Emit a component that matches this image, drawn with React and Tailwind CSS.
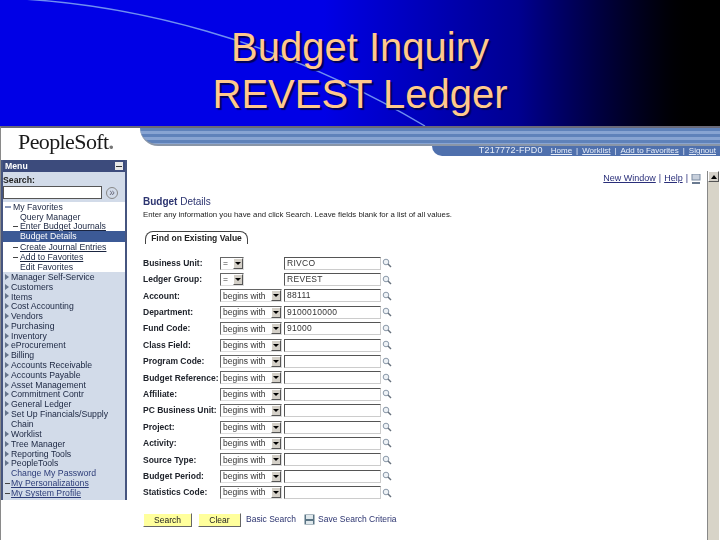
const menuTop = ['Manager Self-Service', 'Customers', 'Items', 'Cost Accounting', 'Vendors', 'Purchasing', 'Inventory', 'eProcurement', 'Billing', 'Accounts Receivable', 'Accounts Payable', 'Asset Management', 'Commitment Contr', 'General Ledger'];

const fields = [
    { label: 'Business Unit:', op: '=', value: 'RIVCO' },
    { label: 'Ledger Group:', op: '=', value: 'REVEST' },
    { label: 'Account:', op: 'begins with', value: '88111' },
    { label: 'Department:', op: 'begins with', value: '9100010000' },
    { label: 'Fund Code:', op: 'begins with', value: '91000' },
    { label: 'Class Field:', op: 'begins with', value: '' },
    { label: 'Program Code:', op: 'begins with', value: '' },
    { label: 'Budget Reference:', op: 'begins with', value: '' },
    { label: 'Affiliate:', op: 'begins with', value: '' },
    { label: 'PC Business Unit:', op: 'begins with', value: '' },
    { label: 'Project:', op: 'begins with', value: '' },
    { label: 'Activity:', op: 'begins with', value: '' },
    { label: 'Source Type:', op: 'begins with', value: '' },
    { label: 'Budget Period:', op: 'begins with', value: '' },
    { label: 'Statistics Code:', op: 'begins with', value: '' },
];

function Lens() {
    return (
        <svg width="10" height="10" viewBox="0 0 10 10" className="shrink-0">
            <circle cx="4" cy="4" r="2.8" fill="#eef2f6" stroke="#8a98a8" strokeWidth="1" />
            <path d="M6 6l3 3" stroke="#66707c" strokeWidth="1.4" />
        </svg>
    );
}

function Arrow() {
    return <span className="w-0 h-0 border-y-[3.5px] border-y-transparent border-l-[4px] border-l-[#66758c] shrink-0" />;
}

function Dash() {
    return <span className="w-[5px] h-[1px] bg-[#444] shrink-0" />;
}

function FieldRow({ field }) {
    const short = field.op === '=';
    return (
        <div className="flex items-center h-[16.4px]">
            <div className="w-[77px] shrink-0 text-[8.5px] font-bold text-[#20242c] whitespace-nowrap">{field.label}</div>
            <div className={`${short ? 'w-[24px] mr-[40px]' : 'w-[62px] mr-[2px]'} h-[13px] shrink-0 flex items-center justify-between border border-t-[#666] border-l-[#666] border-r-[#ddd] border-b-[#ddd] bg-white pl-[2px]`}>
                <span className="text-[8.5px] text-[#333] leading-none whitespace-nowrap">{field.op}</span>
                <span className="w-[10px] h-[11px] bg-[#d4d0c8] border border-white border-r-[#555] border-b-[#555] flex items-center justify-center shrink-0">
                    <span className="w-0 h-0 border-x-[3px] border-x-transparent border-t-[3px] border-t-black" />
                </span>
            </div>
            <div className="w-[97px] h-[13px] shrink-0 border border-t-[#555] border-l-[#555] border-r-[#ccc] border-b-[#ccc] bg-white pl-[2px] text-[8.5px] leading-[11px] text-[#333] tracking-[0.3px]">{field.value}</div>
            <div className="ml-[1px]"><Lens /></div>
        </div>
    );
}

export default function App() {
    return (
        <div className="w-[720px] h-[540px] overflow-hidden bg-white" style={{ fontFamily: '"Liberation Sans", Arial, sans-serif' }}>
            {/* Slide title */}
            <div className="relative h-[126px] bg-gradient-to-r from-[#0000e6] from-45% via-[#000090] via-72% to-[#000000] to-98% flex flex-col items-center pt-[24px]">
                <svg width="720" height="126" viewBox="0 0 720 126" className="absolute left-0 top-0">
                    <path d="M0 -2 C 130 2, 280 40, 425 126" fill="none" stroke="#6f8ff0" strokeWidth="1.4" />
                </svg>
                <div className="relative text-[40px] leading-[47px] text-[#ffc98c] text-center [text-shadow:2px_2px_1px_#00005a]">
                    <div>Budget Inquiry</div>
                    <div>REVEST Ledger</div>
                </div>
            </div>

            {/* Browser page */}
            <div className="h-[414px] border-l border-[#8a8a8a] border-t-2 border-t-[#6a6a78] flex flex-col blur-[0.35px]">
                {/* Header */}
                <div className="h-[32px] shrink-0 flex">
                    <div className="w-[139px] shrink-0 pl-[17px] pt-[1px] text-[22px] leading-[26px] text-[#1a1a1a] tracking-[-0.6px]" style={{ fontFamily: '"Liberation Serif", serif' }}>
                        PeopleSoft<span className="text-[#777] font-bold">.</span>
                    </div>
                    <div className="flex-1 flex flex-col">
                        <div className="h-[18px] rounded-bl-[18px] bg-[repeating-linear-gradient(180deg,#5f82ba_0,#5f82ba_3px,#88a4d2_3px,#88a4d2_6px)] border-b-2 border-[#8a96a8]"></div>
                        <div className="flex justify-end">
                            <div className="w-[288px] h-[10px] bg-[#4f70ad] rounded-bl-[10px] flex items-center justify-end gap-[4px] pr-[4px] text-[8px] text-[#e8eef8] whitespace-nowrap">
                                <span className="mr-[4px] text-[9px] tracking-[0.2px]">T217772-FPD0</span>
                                <span className="underline">Home</span><span>|</span>
                                <span className="underline">Worklist</span><span>|</span>
                                <span className="underline">Add to Favorites</span><span>|</span>
                                <span className="underline">Signout</span>
                            </div>
                        </div>
                    </div>
                </div>

                <div className="flex-1 flex min-h-0">
                    {/* Left menu */}
                    <div className="w-[126px] shrink-0">
                        <div className="border-x-2 border-[#46557f] bg-[#d2dbe9] h-[340px] text-[8.7px] leading-[10px] text-[#1a2540]">
                            <div className="h-[12px] bg-[#3c4b7c] flex items-center justify-between px-[2px] text-white font-bold">
                                <span>Menu</span>
                                <span className="w-[8px] h-[8px] bg-[#e8e8e8] flex items-center justify-center"><span className="w-[6px] h-[1px] bg-[#333]"></span></span>
                            </div>
                            <div className="h-[30px] pt-[3px]">
                                <div className="font-bold text-[#222]">Search:</div>
                                <div className="flex items-center mt-[1px]">
                                    <div className="w-[99px] h-[13px] bg-white border border-[#555]"></div>
                                    <div className="w-[12px] h-[12px] ml-[4px] rounded-full border border-[#888] text-[#667] flex items-center justify-center text-[10px] leading-none">»</div>
                                </div>
                            </div>
                            <div className="bg-white h-[70px]">
                                <div className="flex items-center gap-[2px] pl-[2px] h-[9.5px]"><span className="w-[6px] h-[2px] bg-[#8a98b8]" />My Favorites</div>
                                <div className="pl-[17px] h-[9.5px]">Query Manager</div>
                                <div className="flex items-center pl-[10px] gap-[2px] h-[10px]"><Dash /><span className="underline">Enter Budget Journals</span></div>
                                <div className="pl-[17px] h-[11px] bg-[#3c5a96] text-white leading-[11px]">Budget Details</div>
                                <div className="flex items-center pl-[10px] gap-[2px] h-[10px]"><Dash /><span className="underline">Create Journal Entries</span></div>
                                <div className="flex items-center pl-[10px] gap-[2px] h-[10px]"><Dash /><span className="underline">Add to Favorites</span></div>
                                <div className="pl-[17px] h-[10px]">Edit Favorites</div>
                            </div>
                            {menuTop.map((item) => (
                                <div key={item} className="flex items-center gap-[2px] pl-[2px] h-[9.8px] whitespace-nowrap"><Arrow />{item}</div>
                            ))}
                            <div className="flex items-start gap-[2px] pl-[2px]"><span className="mt-[1px] flex"><Arrow /></span><span>Set Up Financials/Supply<br />Chain</span></div>
                            {['Worklist', 'Tree Manager', 'Reporting Tools', 'PeopleTools'].map((item) => (
                                <div key={item} className="flex items-center gap-[2px] pl-[2px] h-[9.8px]"><Arrow />{item}</div>
                            ))}
                            <div className="pl-[8px] h-[10px] text-[#2c3c78]">Change My Password</div>
                            <div className="flex items-center pl-[2px] gap-[1px] h-[10px]"><Dash /><span className="underline text-[#2c3c78]">My Personalizations</span></div>
                            <div className="flex items-center pl-[2px] gap-[1px] h-[10px]"><Dash /><span className="underline text-[#2c3c78]">My System Profile</span></div>
                        </div>
                    </div>

                    {/* Content */}
                    <div className="flex-1 min-w-0 pl-[16px] pt-[13px] relative">
                        <div className="flex justify-end items-center gap-[3px] pr-[19px] h-[12px] text-[9px] text-[#2a2f7a] whitespace-nowrap">
                            <span className="underline">New Window</span><span>|</span><span className="underline">Help</span><span>|</span>
                            <svg width="10" height="11" viewBox="0 0 10 11"><rect x="1" y="0" width="8" height="6" fill="#c8d0dc" stroke="#7a8aa0" /><rect x="1" y="8" width="8" height="2" fill="#6a7a90" /></svg>
                        </div>
                        <div className="mt-[10px] text-[10px] leading-[13px] text-[#2c3470]"><span className="font-bold">Budget</span> Details</div>
                        <div className="text-[7.8px] leading-[13px] text-[#222] whitespace-nowrap">Enter any information you have and click Search. Leave fields blank for a list of all values.</div>
                        <div className="mt-[10px] ml-[2px] w-[103px] h-[13px] border-t border-x border-[#444] rounded-t-[8px] text-[8.5px] leading-[13px] text-center font-bold text-[#222]">Find on Existing Value</div>
                        <div className="mt-[11px]">
                            {fields.map((f) => <FieldRow key={f.label} field={f} />)}
                        </div>
                        <div className="mt-[12px] flex items-center text-[8.5px] text-[#2c3470] whitespace-nowrap">
                            <div className="w-[49px] h-[14px] bg-[#ffff9c] border border-white border-r-[#666] border-b-[#666] text-center leading-[12px] text-[#222]">Search</div>
                            <div className="ml-[6px] w-[43px] h-[14px] bg-[#ffff9c] border border-white border-r-[#666] border-b-[#666] text-center leading-[12px] text-[#222]">Clear</div>
                            <span className="ml-[5px]">Basic Search</span>
                            <svg width="11" height="11" viewBox="0 0 11 11" className="ml-[8px]"><rect x="0.5" y="0.5" width="10" height="10" fill="#5a7484" /><rect x="2" y="1" width="7" height="4" fill="#dfe8ec" /><rect x="2" y="7" width="7" height="3" fill="#dfe8ec" /></svg>
                            <span className="ml-[3px]">Save Search Criteria</span>
                        </div>
                        {/* Scrollbar */}
                        <div className="absolute right-[1px] top-[11px] bottom-0 w-[12px] bg-[#d8d4c8] border-l border-[#888]">
                            <div className="h-[11px] bg-[#d4d0c8] border border-white border-r-[#555] border-b-[#555] flex items-center justify-center">
                                <span className="w-0 h-0 border-x-[3px] border-x-transparent border-b-[4px] border-b-black" />
                            </div>
                        </div>
                    </div>
                </div>
            </div>
        </div>
    );
}
